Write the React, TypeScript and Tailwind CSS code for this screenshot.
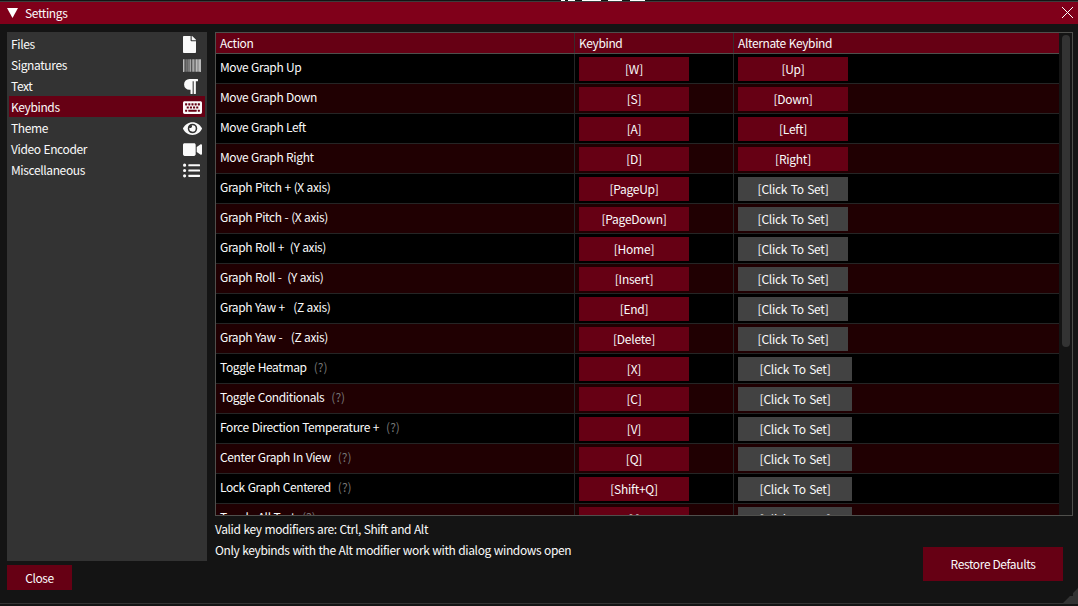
import React from "react";
import { FaFile, FaBarcode, FaParagraph, FaKeyboard, FaEye, FaVideo, FaListUl } from "react-icons/fa";

const sections = [
  { label: "Files", Icon: FaFile, size: "w-[13px] h-[17px]" },
  { label: "Signatures", Icon: FaBarcode, size: "w-[18px] h-[17px]" },
  { label: "Text", Icon: FaParagraph, size: "w-[15px] h-[17px]" },
  { label: "Keybinds", Icon: FaKeyboard, size: "w-[19px] h-[17px]" },
  { label: "Theme", Icon: FaEye, size: "w-[19px] h-[17px]" },
  { label: "Video Encoder", Icon: FaVideo, size: "w-[19px] h-[17px]" },
  { label: "Miscellaneous", Icon: FaListUl, size: "w-[17px] h-[17px]" },
];

type Bind = { action: string; key: string; alt?: string; help?: boolean };

const binds: Bind[] = [
  { action: "Move Graph Up", key: "W", alt: "Up" },
  { action: "Move Graph Down", key: "S", alt: "Down" },
  { action: "Move Graph Left", key: "A", alt: "Left" },
  { action: "Move Graph Right", key: "D", alt: "Right" },
  { action: "Graph Pitch + (X axis)", key: "PageUp" },
  { action: "Graph Pitch - (X axis)", key: "PageDown" },
  { action: "Graph Roll +  (Y axis)", key: "Home" },
  { action: "Graph Roll -  (Y axis)", key: "Insert" },
  { action: "Graph Yaw +   (Z axis)", key: "End" },
  { action: "Graph Yaw -   (Z axis)", key: "Delete" },
  { action: "Toggle Heatmap", key: "X", help: true },
  { action: "Toggle Conditionals", key: "C", help: true },
  { action: "Force Direction Temperature +", key: "V", help: true },
  { action: "Center Graph In View", key: "Q", help: true },
  { action: "Lock Graph Centered", key: "Shift+Q", help: true },
  { action: "Toggle All Text", key: "I", help: true },
];

function KeyButton({ text, className }: { text: string; className: string }) {
  return (
    <button
      className={`mt-[3px] flex h-6 items-center justify-center leading-[20px] tracking-[-0.25px] [word-spacing:1px] ${className}`}
    >
      [{text}]
    </button>
  );
}

export default function App() {
  return (
    <div className="relative flex h-[606px] w-[1078px] flex-col overflow-hidden whitespace-pre bg-[#141414] font-['Noto_Sans_CJK_SC','Noto_Sans',sans-serif] text-[12px] leading-[20px] tracking-[-0.38px] text-[#fafafa] [word-spacing:0.5px]">
      <div className="flex h-px shrink-0 pl-[561px]">
        <i className="h-px w-[4px] bg-white" />
        <i className="ml-[3px] h-px w-[7px] bg-white" />
        <i className="ml-[7px] h-px w-[19px] bg-white" />
        <i className="ml-[7px] h-px w-[14px] bg-white" />
        <i className="ml-[8px] h-px w-[15px] bg-white" />
      </div>
      <header className="flex h-[23px] shrink-0 items-center border-t border-[#3c3c3c] bg-[#80001a] pl-[7px] pr-[5px]">
        <svg className="mb-px h-[10px] w-[11px]" viewBox="0 0 11 10" fill="#fff">
          <path d="M0 0H11L5.5 10Z" />
        </svg>
        <span className="ml-[7px] flex-1 pb-px">Settings</span>
        <svg className="mb-px h-[11px] w-[11px]" viewBox="0 0 11 11" stroke="#fff" strokeWidth="1">
          <path d="M0 0L11 11M11 0L0 11" />
        </svg>
      </header>
      <div className="flex min-h-0 flex-1 pl-[7px] pt-2">
        <div className="flex w-[200px] shrink-0 flex-col">
          <nav className="flex h-[529px] flex-col bg-[#333333] px-[2px] pt-px">
            {sections.map(({ label, Icon, size }) => (
              <div
                key={label}
                className={`flex h-[21px] items-center pl-[2px] pt-[2px] ${label === "Keybinds" ? "bg-[#660014]" : ""}`}
              >
                <span className="w-[172px] pb-[2px]">{label}</span>
                <Icon className={size} preserveAspectRatio="none" />
              </div>
            ))}
          </nav>
          <button className="mt-1 h-[25px] w-[65px] bg-[#660014]">Close</button>
        </div>
        <div className="ml-2 flex w-[858px] shrink-0 flex-col">
          <div className="flex h-[484px] overflow-hidden border border-[#4f4f4c]">
            <div className="w-[843px] shrink-0">
              <div className="flex h-[21px] border-b border-[#4f4f4c] bg-[#660014] leading-[19px]">
                <div className="w-[359px] border-r border-[#3a2a2d] pl-1">Action</div>
                <div className="w-[159px] border-r border-[#3a2a2d] pl-1">Keybind</div>
                <div className="pl-1">Alternate Keybind</div>
              </div>
              {binds.map((b, i) => (
                <div
                  key={b.action}
                  className={`flex h-[30px] border-b border-[#252525] ${i % 2 ? "bg-[#200002]" : "bg-black"}`}
                >
                  <div className="w-[359px] border-r border-[#252525] pl-1 pt-[3px]">
                    {b.action}
                    {b.help && <span className="ml-[7px] tracking-normal text-[#757575]">(?)</span>}
                  </div>
                  <div className="w-[159px] border-r border-[#252525] pl-1">
                    <KeyButton text={b.key} className="w-[110px] bg-[#660014]" />
                  </div>
                  <div className="pl-1">
                    <KeyButton
                      text={b.alt ?? "Click To Set"}
                      className={`${b.help ? "w-[114px]" : "w-[110px]"} ${b.alt ? "bg-[#660014]" : "bg-[#424242]"}`}
                    />
                  </div>
                </div>
              ))}
            </div>
            <div className="w-[13px] bg-[#141414] pl-[3px] pt-[2px]">
              <div className="h-[312px] w-2 rounded-full bg-[#333333]" />
            </div>
          </div>
          <div className="flex justify-between pr-[10px]">
            <div className="pt-[2px] leading-[21px]">
              <p>Valid key modifiers are: Ctrl, Shift and Alt</p>
              <p>Only keybinds with the Alt modifier work with dialog windows open</p>
            </div>
            <button className="mt-[31px] h-[34px] w-[140px] bg-[#660014]">Restore Defaults</button>
          </div>
        </div>
      </div>
      <footer className="h-[3px] shrink-0 border-t border-[#343434]" />
      <svg className="absolute bottom-[3px] right-0 h-[15px] w-[15px]" viewBox="0 0 15 15" fill="#333333">
        <path d="M15 0V15H0L7 8H10V5Z" />
      </svg>
    </div>
  );
}
